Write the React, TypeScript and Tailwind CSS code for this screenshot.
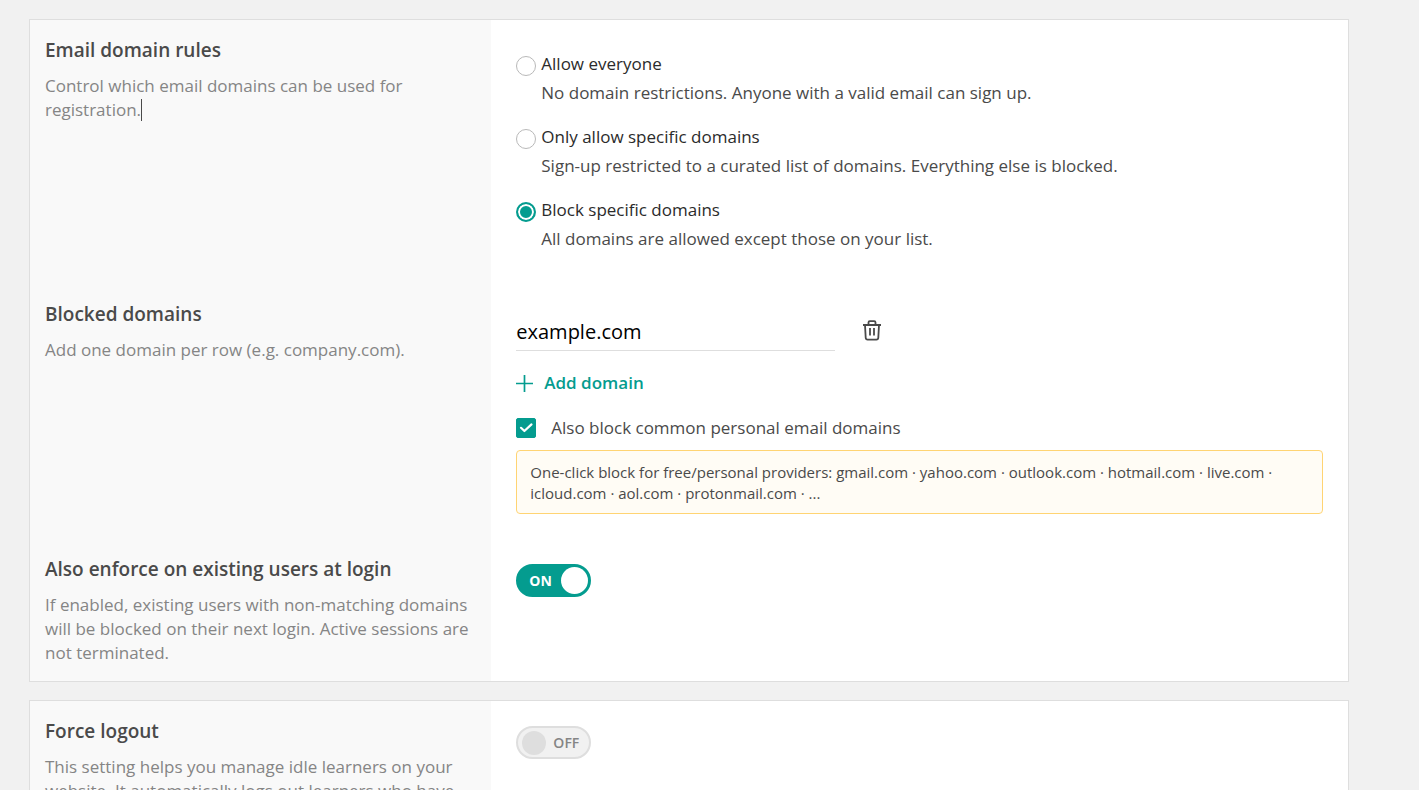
import { useState, type ReactNode } from "react";

const RULES = [
  {
    id: "everyone",
    label: "Allow everyone",
    hint: "No domain restrictions. Anyone with a valid email can sign up."
  },
  {
    id: "allow",
    label: "Only allow specific domains",
    hint: "Sign-up restricted to a curated list of domains. Everything else is blocked."
  },
  {
    id: "block",
    label: "Block specific domains",
    hint: "All domains are allowed except those on your list."
  }
];

interface SettingRowProps {
  title: string;
  description: ReactNode;
  children: ReactNode;
}

function SettingRow({ title, description, children }: SettingRowProps) {
  return (
    <section className="grid grid-cols-[35%_minmax(0,1fr)]">
      <div className="bg-[#f9f9f9] px-[15px] py-4">
        <h2 className="text-[19px] leading-7 font-semibold text-[#4a4a4a]">{title}</h2>
        <p className="mt-[10px] text-[17px] leading-6 text-[#858585]">{description}</p>
      </div>
      <div className="p-[25px]">{children}</div>
    </section>
  );
}

interface ToggleProps {
  label: string;
  checked: boolean;
  onChange: (val: boolean) => void;
}

function Toggle({ label, checked, onChange }: ToggleProps) {
  return (
    <button
      type="button"
      role="switch"
      aria-checked={checked}
      aria-label={label}
      onClick={() => onChange(!checked)}
      className={`flex h-[33px] w-[75px] cursor-pointer items-center justify-between rounded-full border-2 text-sm ${
        checked
          ? "border-[#049c8f] bg-[#049c8f] pr-px pl-[11px] font-bold text-white"
          : "flex-row-reverse border-[#dedede] bg-[#f1f1f1] pr-[10px] pl-1 font-semibold text-[#858585]"
      }`}
    >
      <span>{checked ? "ON" : "OFF"}</span>
      <span className={checked ? "size-[27px] rounded-full bg-white" : "size-6 rounded-full bg-[#dedede]"} />
    </button>
  );
}

function TrashIcon() {
  return (
    <svg width="20" height="22" viewBox="0 0 20 22" fill="none" stroke="#4a4a4a" strokeWidth="1.8" aria-hidden="true">
      <path d="M1 6h18M6.5 6V3.4c0-.8.5-1.3 1.3-1.3h4.4c.8 0 1.3.5 1.3 1.3V6" />
      <path d="M3 6l.7 12.8c.1 1.2.8 1.8 1.9 1.8h8.8c1.1 0 1.8-.6 1.9-1.8L17 6" />
      <path d="M8 9v7.5M12 9v7.5" />
    </svg>
  );
}

export default function App() {
  const [rule, setRule] = useState("block");
  const [domain, setDomain] = useState("example.com");
  const [blockCommon, setBlockCommon] = useState(true);
  const [enforce, setEnforce] = useState(true);
  const [forceLogout, setForceLogout] = useState(false);

  return (
    <main className="flex h-screen flex-col gap-[18px] overflow-hidden bg-[#f1f1f1] pt-[19px] pr-[70px] pl-[29px] font-['Open_Sans','Noto_Sans',sans-serif]">
      <div className="shrink-0 border border-[#dedede] bg-white">
        <SettingRow
          title="Email domain rules"
          description={
            <>
              Control which email domains can be used for registration.
              <span className="inline-block h-[22px] w-px bg-[#4a4a4a] align-text-bottom" />
            </>
          }
        >
          <div className="flex flex-col gap-5 pt-[7px] pb-2">
            {RULES.map((item) => (
              <div key={item.id} className="grid grid-cols-[20px_1fr] gap-x-[5px] gap-y-[5px] leading-6">
                <input
                  type="radio"
                  id={item.id}
                  name="rule"
                  checked={rule === item.id}
                  onChange={() => setRule(item.id)}
                  aria-describedby={`${item.id}-hint`}
                  className="size-5 cursor-pointer appearance-none self-end rounded-full border border-[#b9b9b9] bg-white checked:border-2 checked:border-[#049c8f] checked:bg-[#049c8f] checked:shadow-[inset_0_0_0_2px_white]"
                />
                <label htmlFor={item.id} className="cursor-pointer text-[17px] text-[#2b2b2b]">
                  {item.label}
                </label>
                <p id={`${item.id}-hint`} className="col-start-2 text-[17px] text-[#4a4a4a]">
                  {item.hint}
                </p>
              </div>
            ))}
          </div>
        </SettingRow>

        <SettingRow title="Blocked domains" description="Add one domain per row (e.g. company.com).">
          <div className="flex items-center gap-[27px]">
            <input
              type="text"
              aria-label="Blocked domain"
              value={domain}
              onChange={(e) => setDomain(e.target.value)}
              className="h-[42px] w-[319px] border-b border-[#dedede] pt-1 text-xl text-black outline-none"
            />
            <button type="button" aria-label="Remove domain" className="cursor-pointer">
              <TrashIcon />
            </button>
          </div>

          <button
            type="button"
            className="mt-5 flex cursor-pointer items-center gap-[11px] text-[17px] leading-6 font-semibold text-[#049c8f]"
          >
            <svg width="17" height="17" viewBox="0 0 17 17" stroke="currentColor" strokeWidth="1.7" aria-hidden="true">
              <path d="M8.5 0v17M0 8.5h17" />
            </svg>
            Add domain
          </button>

          <label className="mt-[21px] flex cursor-pointer items-center gap-[15px] text-[17px] leading-6 text-[#4a4a4a]">
            <span className="relative flex size-5">
              <input
                type="checkbox"
                checked={blockCommon}
                onChange={(e) => setBlockCommon(e.target.checked)}
                className="size-5 cursor-pointer appearance-none rounded-xs border border-[#b9b9b9] checked:border-[#049c8f] checked:bg-[#049c8f]"
              />
              {blockCommon && (
                <svg
                  viewBox="0 0 20 20"
                  fill="none"
                  stroke="white"
                  strokeWidth="2.2"
                  strokeLinecap="round"
                  strokeLinejoin="round"
                  className="pointer-events-none absolute inset-0"
                  aria-hidden="true"
                >
                  <path d="M5 9.8l3.4 3.2L15.5 6.4" />
                </svg>
              )}
            </span>
            Also block common personal email domains
          </label>

          <p className="mt-[10px] rounded-sm border border-[#ffd473] bg-[#fffcf5] px-[13px] pt-[11px] pb-[9px] text-[15px] leading-[21px] text-[#4a4a4a]">
            One-click block for free/personal providers: gmail.com · yahoo.com · outlook.com · hotmail.com · live.com ·
            icloud.com · aol.com · protonmail.com · ...
          </p>
        </SettingRow>

        <SettingRow
          title="Also enforce on existing users at login"
          description="If enabled, existing users with non-matching domains will be blocked on their next login. Active sessions are not terminated."
        >
          <Toggle label="Also enforce on existing users at login" checked={enforce} onChange={setEnforce} />
        </SettingRow>
      </div>

      <div className="shrink-0 border border-[#dedede] bg-white">
        <SettingRow
          title="Force logout"
          description="This setting helps you manage idle learners on your website. It automatically logs out learners who have"
        >
          <Toggle label="Force logout" checked={forceLogout} onChange={setForceLogout} />
        </SettingRow>
      </div>
    </main>
  );
}
